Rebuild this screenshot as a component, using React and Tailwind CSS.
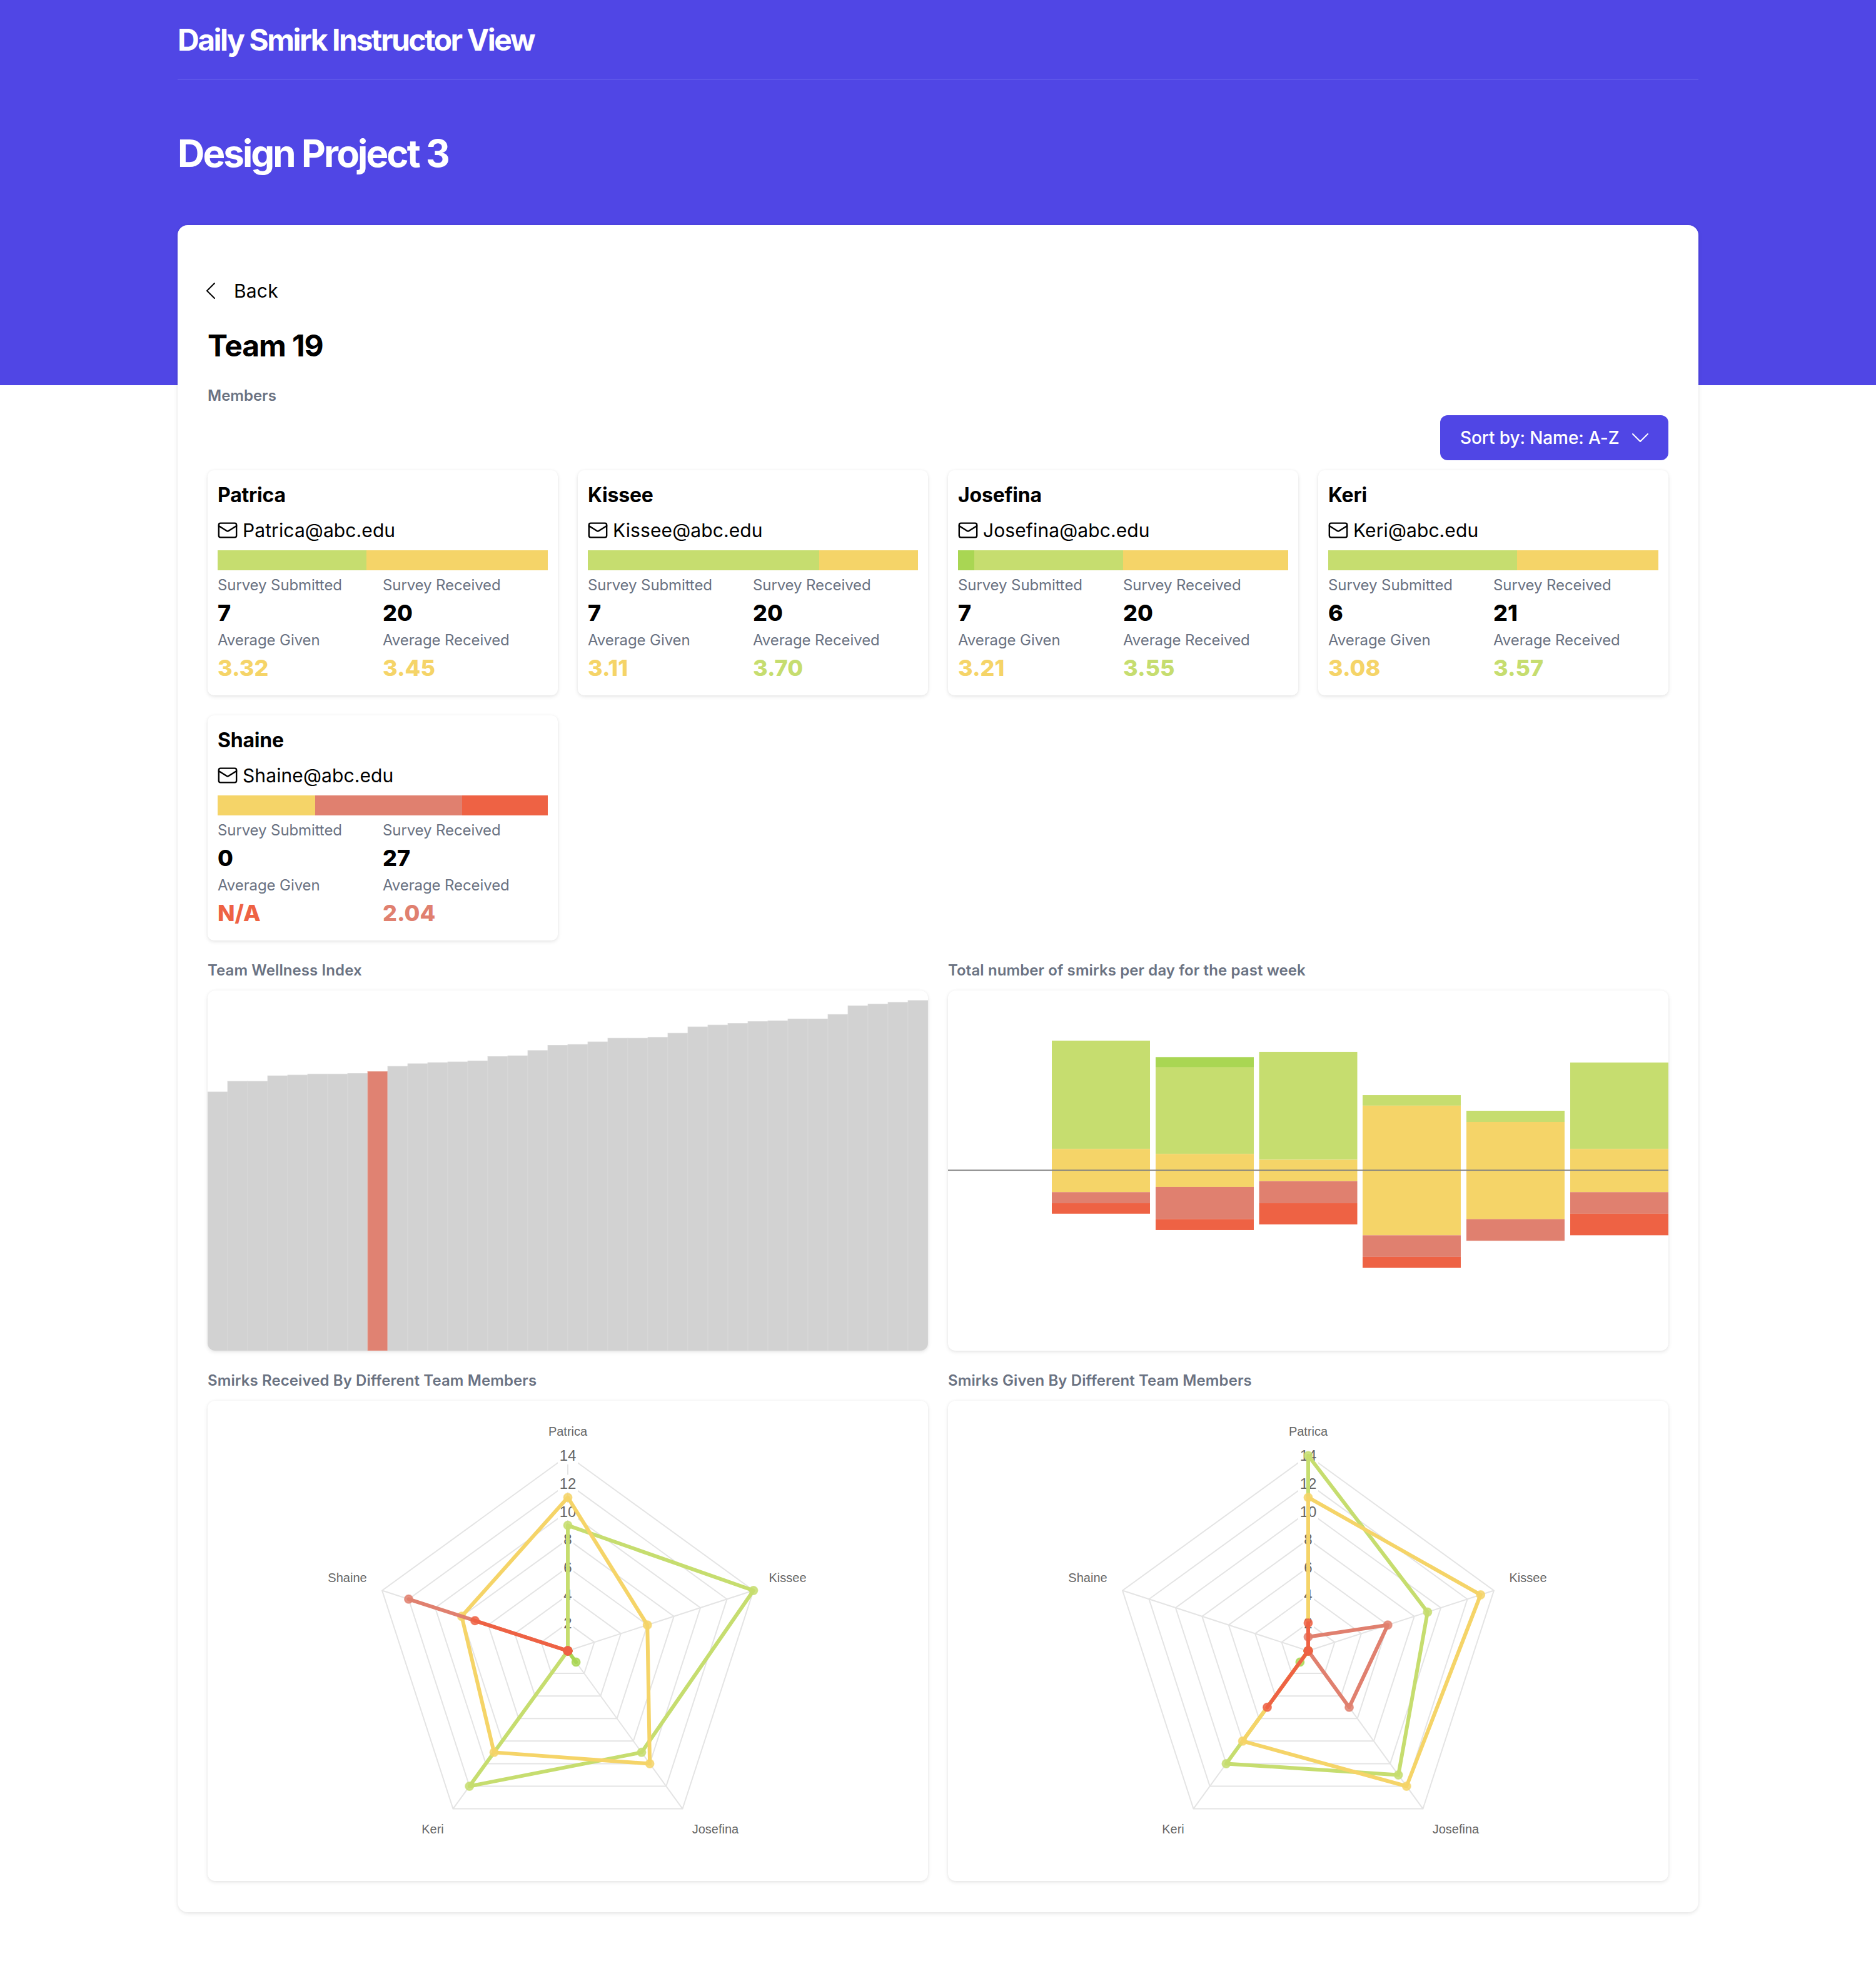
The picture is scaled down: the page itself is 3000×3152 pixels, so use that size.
import { BsChevronDown, BsChevronLeft } from 'react-icons/bs';
import { Mail } from 'lucide-react';

const GREEN = '#c6dd6f';
const DARK_GREEN = '#a9d653';
const YELLOW = '#f5d468';
const SALMON = '#e0806f';
const RED = '#ee6244';

const members = [
  { name: 'Patrica', bar: [[GREEN, 9], [YELLOW, 11]], submitted: 7, received: 20, given: '3.32', givenColor: 'text-[#f5d468]', avg: '3.45', avgColor: 'text-[#f5d468]' },
  { name: 'Kissee', bar: [[GREEN, 14], [YELLOW, 6]], submitted: 7, received: 20, given: '3.11', givenColor: 'text-[#f5d468]', avg: '3.70', avgColor: 'text-[#c6dd6f]' },
  { name: 'Josefina', bar: [[DARK_GREEN, 1], [GREEN, 9], [YELLOW, 10]], submitted: 7, received: 20, given: '3.21', givenColor: 'text-[#f5d468]', avg: '3.55', avgColor: 'text-[#c6dd6f]' },
  { name: 'Keri', bar: [[GREEN, 12], [YELLOW, 9]], submitted: 6, received: 21, given: '3.08', givenColor: 'text-[#f5d468]', avg: '3.57', avgColor: 'text-[#c6dd6f]' },
  { name: 'Shaine', bar: [[YELLOW, 8], [SALMON, 12], [RED, 7]], submitted: 0, received: 27, given: 'N/A', givenColor: 'text-[#ee6244]', avg: '2.04', avgColor: 'text-[#e0806f]' },
];

// top edge of each wellness bar, card-local px
const wellnessTops = [537, 497, 497, 476, 473, 470, 470, 467, 460, 440, 430, 426, 423, 420, 403, 400, 380, 360, 357, 347, 333, 333, 330, 314, 290, 283, 277, 270, 267, 260, 260, 243, 210, 204, 197, 190].map((v) => v / 2.376 - 64);

// segment boundaries per day, read off the reference
const days = [
  { x: 166, stops: [343, 754, 918, 960, 1000], colors: [GREEN, YELLOW, SALMON, RED] },
  { x: 332, stops: [405, 444, 773, 898, 1021, 1062], colors: [DARK_GREEN, GREEN, YELLOW, SALMON, RED] },
  { x: 497.5, stops: [385, 795, 877, 960, 1041], colors: [GREEN, YELLOW, SALMON, RED] },
  { x: 663, stops: [549, 590, 1082, 1164, 1206], colors: [GREEN, YELLOW, SALMON, RED] },
  { x: 829, stops: [610, 651, 1021, 1103], colors: [GREEN, YELLOW, SALMON] },
  { x: 995, stops: [426, 754, 918, 1000, 1082], colors: [GREEN, YELLOW, SALMON, RED] },
];

const received = [
  { color: DARK_GREEN, values: [0, 0, 1, 0, 0] },
  { color: GREEN, values: [9, 14, 9, 12, 0] },
  { color: YELLOW, values: [11, 6, 10, 9, 8] },
  { color: SALMON, values: [0, 0, 0, 0, 12] },
  { color: RED, values: [0, 0, 0, 0, 7] },
];

const given = [
  { color: DARK_GREEN, values: [0, 0, 0, 1, 0] },
  { color: GREEN, values: [14, 9, 11, 10, 0] },
  { color: YELLOW, values: [11, 13, 12, 8, 0] },
  { color: SALMON, values: [1, 6, 5, 0, 0] },
  { color: RED, values: [2, 0, 0, 5, 0] },
];

const CX = 576;
const CY = 400;
const UNIT = 22.3;

const radarPoint = (axis, value) => {
  const angle = (axis * 2 * Math.PI) / 5;
  return [CX + Math.sin(angle) * value * UNIT, CY - Math.cos(angle) * value * UNIT];
};

const radarLabels = [
  { text: 'Patrica', dx: 0, y: 49 },
  { text: 'Kissee', dx: 351.5, y: 283 },
  { text: 'Josefina', dx: 236, y: 685 },
  { text: 'Keri', dx: -216, y: 685 },
  { text: 'Shaine', dx: -352.5, y: 283 },
];

const Radar = ({ series }) => (
  <svg viewBox="0 0 1152 768" className="block w-full h-full">
    {[2, 4, 6, 8, 10, 12, 14].map((ring) => (
      <polygon
        key={ring}
        points={[0, 1, 2, 3, 4].map((a) => radarPoint(a, ring).join(',')).join(' ')}
        fill="none"
        stroke="#e4e4e4"
        strokeWidth="2"
      />
    ))}
    {[0, 1, 2, 3, 4].map((a) => {
      const [x, y] = radarPoint(a, 14);
      return <line key={a} x1={CX} y1={CY} x2={x} y2={y} stroke="#e4e4e4" strokeWidth="2" />;
    })}
    {[2, 4, 6, 8, 10, 12, 14].map((tick) => (
      <g key={tick}>
        <rect x={CX - (tick > 8 ? 16 : 9)} y={CY - tick * UNIT - 14} width={tick > 8 ? 32 : 18} height="28" fill="#fff" />
        <text x={CX} y={CY - tick * UNIT + 8.5} textAnchor="middle" fontSize="24" fill="#666" fontFamily="'Liberation Sans', sans-serif">
          {tick}
        </text>
      </g>
    ))}
    {radarLabels.map((l) => (
      <text key={l.text} x={CX + l.dx} y={l.y + 7} textAnchor="middle" fontSize="20" fill="#666" fontFamily="'Liberation Sans', sans-serif">
        {l.text}
      </text>
    ))}
    {series.map((s) => (
      <g key={s.color}>
        <polygon
          points={s.values.map((v, a) => radarPoint(a, v).join(',')).join(' ')}
          fill="none"
          stroke={s.color}
          strokeWidth="6"
          strokeLinejoin="round"
        />
        {s.values.map((v, a) => {
          const [x, y] = radarPoint(a, v);
          return <circle key={a} cx={x} cy={y} r="6.5" fill={s.color} fillOpacity="0.85" stroke={s.color} strokeOpacity="0.7" strokeWidth="2" />;
        })}
      </g>
    ))}
  </svg>
);

const WellnessChart = () => (
  <svg viewBox="0 0 1152 576" className="block w-full h-full">
    {wellnessTops.map((top, i) => (
      <rect key={i} x={i * 32} y={top} width="32" height={576 - top} fill={i === 8 ? '#e08272' : '#d2d2d2'} stroke={i === 8 ? '#e8a294' : '#d9d9d9'} strokeWidth="0.75" />
    ))}
  </svg>
);

const WeekChart = () => (
  <svg viewBox="0 0 1152 576" className="block w-full h-full">
    {days.map((day) =>
      day.colors.map((color, i) => {
        const y1 = day.stops[i] / 2.376 - 64;
        const y2 = day.stops[i + 1] / 2.376 - 64;
        return <rect key={`${day.x}-${i}`} x={day.x} y={y1} width="157" height={y2 - y1} fill={color} />;
      })
    )}
    <line x1="0" x2="1152" y1="287.5" y2="287.5" stroke="#808080" strokeWidth="2" />
  </svg>
);

const MemberCard = ({ member }) => (
  <div className="rounded-[10px] bg-white p-4 shadow-[0_2px_6px_rgba(0,0,0,0.1),0_0_4px_rgba(0,0,0,0.03)]">
    <div className="text-[32px] leading-[48px] font-bold tracking-[-0.2px] text-black">{member.name}</div>
    <div className="mt-2 flex items-center gap-[7px] text-[30px] leading-[48px] tracking-[0.1px] text-black">
      <Mail size={34} strokeWidth={1.7} className="-ml-px shrink-0" />
      <span>{member.name}@abc.edu</span>
    </div>
    <div className="mt-2 flex h-8 w-full">
      {member.bar.map(([color, value]) => (
        <div key={color} style={{ flexGrow: value, flexBasis: 0, backgroundColor: color }} />
      ))}
    </div>
    <div className="mt-2 grid grid-cols-2">
      <div>
        <div className="text-2xl leading-8 tracking-[-0.1px] text-gray-500">Survey Submitted</div>
        <div className="text-[36px] leading-[56px] font-extrabold text-black">{member.submitted}</div>
      </div>
      <div>
        <div className="text-2xl leading-8 tracking-[-0.1px] text-gray-500">Survey Received</div>
        <div className="text-[36px] leading-[56px] font-extrabold text-black">{member.received}</div>
      </div>
      <div>
        <div className="text-2xl leading-8 tracking-[-0.1px] text-gray-500">Average Given</div>
        <div className={`text-[36px] leading-[56px] font-extrabold ${member.givenColor}`}>{member.given}</div>
      </div>
      <div>
        <div className="text-2xl leading-8 tracking-[-0.1px] text-gray-500">Average Received</div>
        <div className={`text-[36px] leading-[56px] font-extrabold ${member.avgColor}`}>{member.avg}</div>
      </div>
    </div>
  </div>
);

const ChartCard = ({ title, height, children }) => (
  <div>
    <h3 className="text-2xl leading-8 font-semibold tracking-[0.1px] text-gray-500">{title}</h3>
    <div className={`mt-4 overflow-hidden rounded-xl bg-white shadow-[0_2px_6px_rgba(0,0,0,0.1),0_0_4px_rgba(0,0,0,0.03)] ${height}`}>
      {children}
    </div>
  </div>
);

const App = () => (
  <div className="min-h-[3152px] bg-white font-['Inter',sans-serif]">
    <div className="h-[616px] bg-[#5046e5]">
      <div className="mx-[284px]">
        <div className="h-[128px] border-b-2 border-[#5d55e9] pt-8">
          <h1 className="text-5xl leading-[64px] font-bold tracking-[-2.5px] text-white">Daily Smirk Instructor View</h1>
        </div>
        <h2 className="mt-[81px] text-6xl leading-[72px] font-bold tracking-[-2.9px] text-white">Design Project 3</h2>
      </div>
    </div>

    <div className="mx-[284px] -mt-[256px] rounded-2xl bg-white px-12 pt-[81px] pb-[50px] shadow-[0_2px_6px_rgba(0,0,0,0.1),0_0_4px_rgba(0,0,0,0.03)]">
      <div className="-ml-[11px] flex h-12 items-center gap-[21px] text-[30px] leading-[48px] tracking-[0.2px] text-black">
        <BsChevronLeft size={32} />
        <span>Back</span>
      </div>
      <div className="mt-8 text-5xl leading-16 font-bold tracking-[-1.1px] text-black">Team 19</div>
      <div className="mt-8 text-2xl leading-8 font-semibold text-gray-500">Members</div>

      <div className="mt-[15px] flex justify-end">
        <button className="flex h-[72px] w-[365px] items-center gap-[18px] rounded-xl bg-[#5046e5] pl-8 text-[28px] font-medium tracking-[-0.1px] text-white">
          <span>Sort by: Name: A-Z</span>
          <BsChevronDown size={32} />
        </button>
      </div>

      <div className="mt-4 grid grid-cols-4 gap-8">
        {members.map((member) => (
          <MemberCard key={member.name} member={member} />
        ))}
      </div>

      <div className="mt-8 grid grid-cols-2 gap-8">
        <ChartCard title="Team Wellness Index" height="h-[576px]">
          <WellnessChart />
        </ChartCard>
        <ChartCard title="Total number of smirks per day for the past week" height="h-[576px]">
          <WeekChart />
        </ChartCard>
        <ChartCard title="Smirks Received By Different Team Members" height="h-[768px]">
          <Radar series={received} />
        </ChartCard>
        <ChartCard title="Smirks Given By Different Team Members" height="h-[768px]">
          <Radar series={given} />
        </ChartCard>
      </div>
    </div>
  </div>
);

export default App;
